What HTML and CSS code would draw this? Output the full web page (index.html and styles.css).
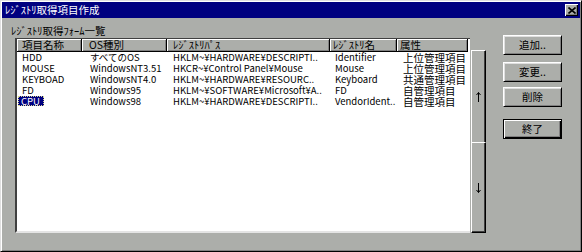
FILE: index.html
```html
<!DOCTYPE html>
<html lang="ja">
<head>
<meta charset="utf-8">
<title>ﾚｼﾞｽﾄﾘ取得項目作成</title>
<link rel="stylesheet" href="styles.css">
</head>
<body>
<div class="window">
  <div class="titlebar">
    <span class="title">ﾚｼﾞｽﾄﾘ取得項目作成</span>
    <button class="close" aria-label="閉じる">
      <svg width="8" height="7" viewBox="0 0 8 7"><path d="M0.5 0.5 L7.5 6.5 M7.5 0.5 L0.5 6.5" stroke="#000" stroke-width="1.6" fill="none"/></svg>
    </button>
  </div>
  <div class="main">
    <div class="listpane">
      <div class="label">ﾚｼﾞｽﾄﾘ取得ﾌｫｰﾑ一覧</div>
      <div class="listbox">
        <div class="header">
          <div class="hcell c1">項目名称</div>
          <div class="hcell c2">OS種別</div>
          <div class="hcell c3">ﾚｼﾞｽﾄﾘﾊﾟｽ</div>
          <div class="hcell c4">ﾚｼﾞｽﾄﾘ名</div>
          <div class="hcell c5">属性</div>
        </div>
        <div class="row">
          <div class="cell c1">HDD</div>
          <div class="cell c2">すべてのOS</div>
          <div class="cell c3">HKLM~¥HARDWARE¥DESCRIPTI..</div>
          <div class="cell c4">Identifier</div>
          <div class="cell c5">上位管理項目</div>
        </div>
        <div class="row">
          <div class="cell c1">MOUSE</div>
          <div class="cell c2">WindowsNT3.51</div>
          <div class="cell c3">HKCR~¥Control Panel¥Mouse</div>
          <div class="cell c4">Mouse</div>
          <div class="cell c5">上位管理項目</div>
        </div>
        <div class="row">
          <div class="cell c1">KEYBOAD</div>
          <div class="cell c2">WindowsNT4.0</div>
          <div class="cell c3">HKLM~¥HARDWARE¥RESOURC..</div>
          <div class="cell c4">Keyboard</div>
          <div class="cell c5">共通管理項目</div>
        </div>
        <div class="row">
          <div class="cell c1">FD</div>
          <div class="cell c2">Windows95</div>
          <div class="cell c3">HKLM~¥SOFTWARE¥Microsoft¥A..</div>
          <div class="cell c4">FD</div>
          <div class="cell c5">自管理項目</div>
        </div>
        <div class="row">
          <div class="cell c1 sel-cell"><span class="selected">CPU</span></div>
          <div class="cell c2">Windows98</div>
          <div class="cell c3">HKLM~¥HARDWARE¥DESCRIPTI..</div>
          <div class="cell c4">VendorIdent..</div>
          <div class="cell c5">自管理項目</div>
        </div>
      </div>
    </div>
    <div class="scrollcol">
      <div class="sbtn up">
        <svg width="5" height="10" viewBox="0 0 5 10"><path d="M2.5 0.5 V10 M0.5 3 L2.5 0.5 L4.5 3" stroke="#000" stroke-width="1" fill="none"/></svg>
      </div>
      <div class="sbtn down">
        <svg width="5" height="10" viewBox="0 0 5 10"><path d="M2.5 0 V9.5 M0.5 7 L2.5 9.5 L4.5 7" stroke="#000" stroke-width="1" fill="none"/></svg>
      </div>
    </div>
    <div class="buttons">
      <button class="btn b-add">追加..</button>
      <button class="btn b-edit">変更..</button>
      <button class="btn b-del">削除</button>
      <button class="btn b-end default">終了</button>
    </div>
  </div>
</div>
</body>
</html>
```
FILE: styles.css
```css
html, body {
  margin: 0;
  padding: 0;
  background: #acaeaa;
}
body {
  font-family: "Noto Sans CJK JP", "Liberation Sans", sans-serif;
  font-size: 10.5px;
  color: #000;
}
.window {
  width: 582px;
  height: 252px;
  box-sizing: border-box;
  background: #acaeaa;
  border: 1px solid;
  border-color: #dfdfdf #000 #000 #dfdfdf;
  box-shadow: inset 1px 1px #fff, inset -1px -1px #808080;
  padding: 1px;
  display: flex;
  flex-direction: column;
}
.titlebar {
  height: 16px;
  background: #000080;
  color: #fff;
  display: flex;
  align-items: center;
  justify-content: space-between;
  padding: 0 2px 0 3px;
}
.title {
  font-size: 10.5px;
  line-height: 16px;
}
.close {
  width: 13px;
  height: 12px;
  padding: 0;
  margin: 0;
  border: 0;
  background: #acaeaa;
  box-shadow: inset 1px 1px #fff, inset -1px -1px #000, inset -2px -2px #808080;
  display: flex;
  align-items: center;
  justify-content: center;
}
.close svg { display: block; }
.main {
  display: flex;
  align-items: flex-start;
}
.listpane {
  margin-left: 9px;
  display: flex;
  flex-direction: column;
}
.label {
  margin-top: 7px;
  line-height: 12px;
  height: 12px;
  white-space: nowrap;
}
.listbox {
  margin-top: 1px;
  margin-left: 4px;
  width: 455px;
  height: 195px;
  box-sizing: border-box;
  background: #fff;
  border-style: solid;
  border-width: 1px 0 2px 2px;
  border-color: #404040 transparent #e4e4e4 #404040;
}
.header {
  display: grid;
  grid-template-columns: 65px 85px 163px 67px 71px;
  height: 13px;
}
.hcell {
  background: #acaeaa;
  box-sizing: border-box;
  height: 13px;
  line-height: 12px;
  border-right: 1px solid #000;
  border-bottom: 1px solid #000;
  box-shadow: inset 1px 1px #fff, inset -1px -1px #808080;
  white-space: nowrap;
}
.hcell.c1 { padding-left: 5px; }
.hcell.c2 { padding-left: 7px; }
.hcell.c3 { padding-left: 6px; }
.hcell.c4 { padding-left: 3px; }
.hcell.c5 { padding-left: 3px; }
.row {
  display: grid;
  grid-template-columns: 65px 85px 163px 67px 71px;
  height: 11px;
  line-height: 11px;
}
.cell {
  white-space: nowrap;
  font-size: 9.5px;
}
.cell.c1 { padding-left: 5px; }
.cell.c2 { padding-left: 8px; }
.cell.c3 { padding-left: 6px; }
.cell.c4 { padding-left: 5px; }
.cell.c5 { padding-left: 6px; font-size: 10.5px; }
.cell.sel-cell { padding-left: 1px; }
.selected {
  display: inline-block;
  background: #000080;
  color: #fff;
  padding: 0 4px 0 3px;
  height: 10px;
  line-height: 10px;
  outline: 1px dotted #d8d890;
  outline-offset: -1px;
}
.scrollcol {
  margin-top: 32px;
  margin-left: 1px;
  width: 15px;
  height: 183px;
  display: flex;
  flex-direction: column;
}
.sbtn {
  box-sizing: border-box;
  background: #acaeaa;
  border-left: 1px solid #fff;
  border-top: 1px solid #fff;
  border-right: 1px solid #000;
  box-shadow: inset -1px 0 #404040;
  display: flex;
  align-items: center;
  justify-content: center;
}
.sbtn svg { display: block; }
.sbtn.up { height: 92px; }
.sbtn.down {
  height: 91px;
  border-bottom: 1px solid #000;
  box-shadow: inset -1px -1px #404040;
}
.buttons {
  margin-left: 17px;
  margin-top: 17px;
  width: 59px;
  display: flex;
  flex-direction: column;
}
.btn {
  width: 59px;
  height: 20px;
  box-sizing: border-box;
  padding: 0;
  margin: 0;
  font-family: "Noto Sans CJK JP", "Liberation Sans", sans-serif;
  font-size: 10.5px;
  line-height: 16px;
  color: #000;
  background: #acaeaa;
  border: 1px solid;
  border-color: #fff #000 #000 #fff;
  box-shadow: inset 1px 1px #dfdfdf, inset -1px -1px #808080;
}
.b-edit { margin-top: 7px; }
.b-del { margin-top: 5px; }
.b-end { margin-top: 12px; }
.btn.default {
  border-color: #000;
  box-shadow: inset 1px 1px #fff, inset -1px -1px #000, inset -2px -2px #808080;
}
```
